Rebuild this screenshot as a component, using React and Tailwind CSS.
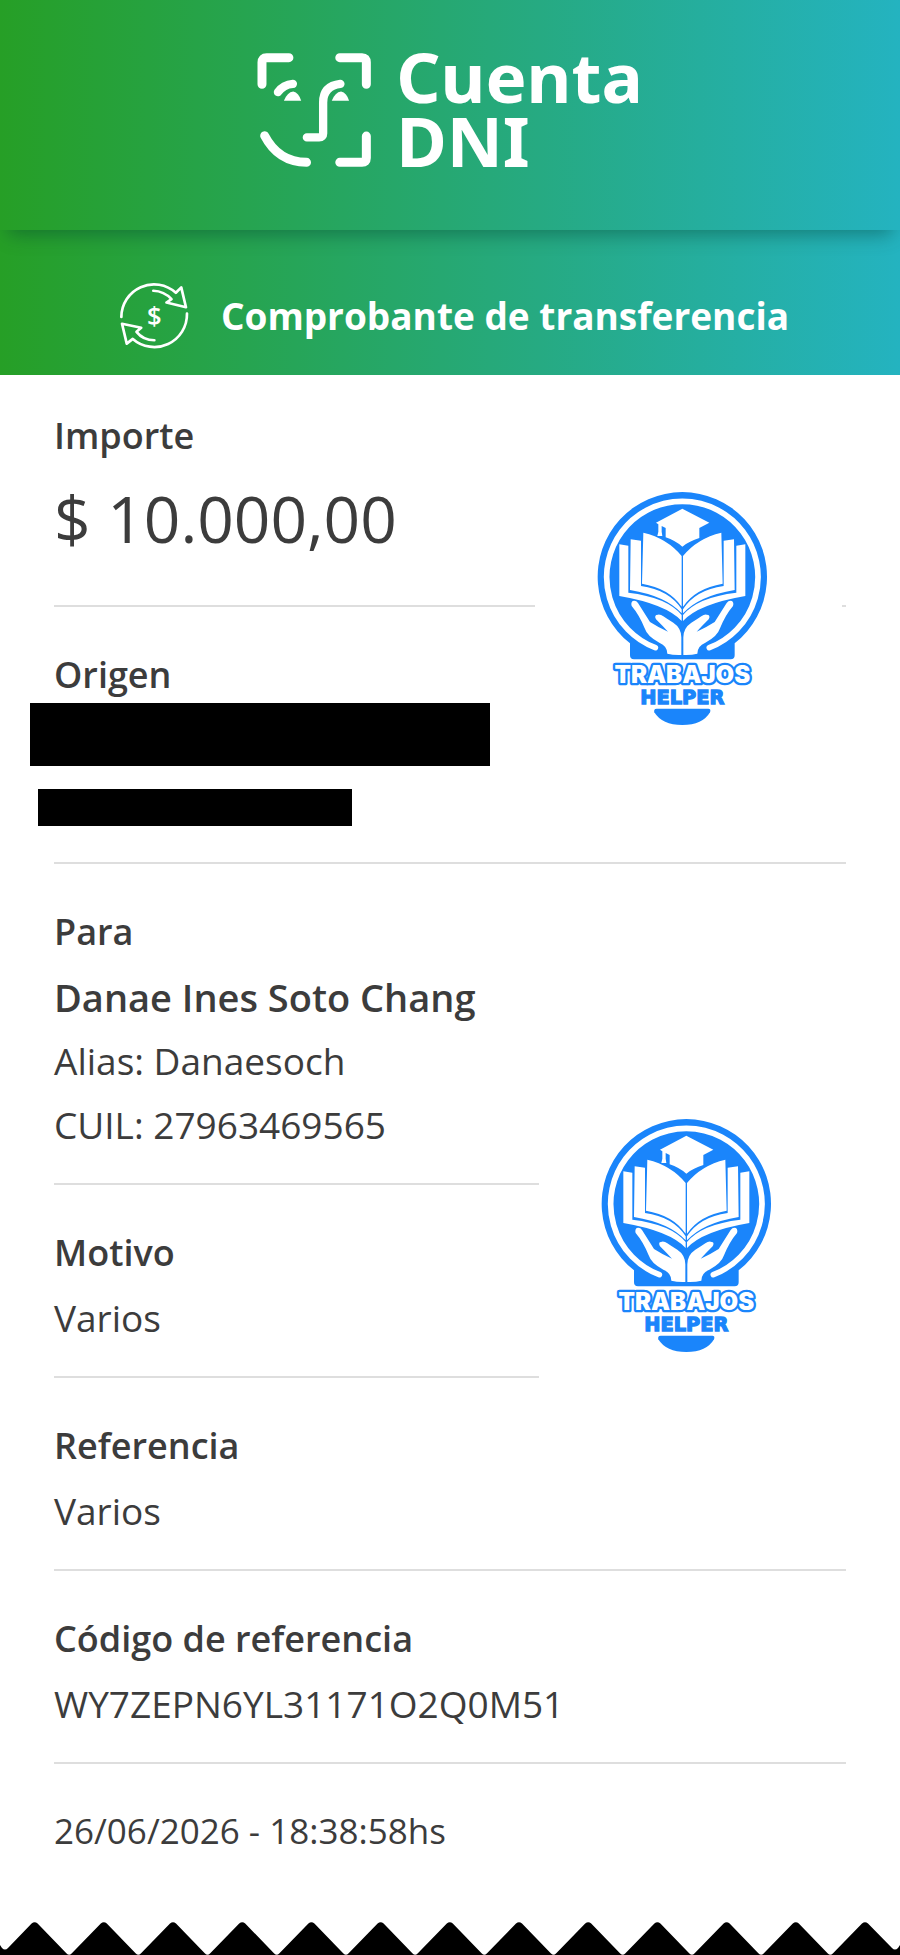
import React from "react";

const TransferIcon = () => (
  <svg
    viewBox="58 48 208 212"
    className="w-[70px] shrink-0"
    fill="none"
    stroke="white"
    strokeWidth="8"
    strokeLinecap="round"
    strokeLinejoin="round"
    aria-hidden="true"
  >
    <path d="M65 158 A97 97 0 0 1 227 86 L243 70 L257 129 L199 115 L214 105 Q192 81 160 80" />
    <path d="M260 148 A97 97 0 0 1 99 223 L81 237 L67 178 L124 190 L110 202 Q130 227 163 227" />
    <text
      x="163"
      y="182"
      textAnchor="middle"
      fill="white"
      stroke="none"
      className="font-['Open_Sans',sans-serif] text-[76px] font-semibold"
    >
      $
    </text>
  </svg>
);

const FaceLogo = () => (
  <svg
    viewBox="48 66 346 348"
    className="mt-2 w-[115px] shrink-0"
    fill="none"
    stroke="white"
    strokeWidth="27"
    strokeLinecap="round"
    strokeLinejoin="round"
    aria-hidden="true"
  >
    <path d="M63 163 V97 Q63 83 77 83 H144" />
    <path d="M297 83 H364 Q377 83 377 97 V163" />
    <path d="M377 319 V385 Q377 398 364 398 H297" />
    <path d="M71 318 Q112 397 197 398" />
    <path d="M111 187 Q127 164 156 162" strokeWidth="25" />
    <path d="M299 162 Q247 168 247 218 V311 Q247 323 235 323 H198" strokeWidth="25" />
    <path d="M129 213 Q139 187 157 185 Q174 189 181 213 Z" fill="white" stroke="none" />
    <path d="M273 213 Q283 187 301 185 Q318 189 325 213 Z" fill="white" stroke="none" />
  </svg>
);

const HalfEmblem = () => (
  <>
    <path d="M118 193 L145 197 V338 Q262 352 305 405 V423 Q258 372 118 348 Z" />
    <path d="M152 178 L183 182 V318 Q268 330 305 388 V400 Q258 348 150 330 Z" />
    <path d="M190 158 Q262 175 305 228 V380 Q268 325 186 311 Z" />
    <path d="M158 363 Q168 360 174 369 L210 426 Q238 444 264 455 Q248 438 228 418 Q221 404 234 404 Q242 403 250 409 Q264 419 280 428 Q304 444 304 472 V525 Q280 526 262 521 Q262 498 238 488 Q202 470 194 445 Q178 405 155 378 Q152 368 158 363 Z" />
  </>
);

const Watermark = ({ className }) => (
  <svg
    viewBox="-135 -75 921 921"
    className={`absolute w-[307px] bg-white ${className}`}
    role="img"
    aria-label="Trabajos Helper"
  >
    <g fill="#1a85fb">
      <path d="M150 490 A254 254 0 1 1 464 490 V526 Q464 538 452 538 H162 Q150 538 150 526 Z" />
      <path d="M230 686 H385 Q394 687 390 697 Q368 735 307 735 Q246 735 223 697 Q220 687 230 686 Z" />
    </g>
    <path
      d="M226 503 A227 227 0 1 1 388 503"
      fill="none"
      stroke="white"
      strokeWidth="17"
      strokeLinecap="round"
    />
    <g fill="white">
      <path d="M307 86 L388 128 L358 144 V174 Q328 183 307 200 Q286 182 257 172 V144 L245 138 V155 L247 168 H232 L235 155 V133 L228 128 Z" />
      <HalfEmblem />
      <g transform="translate(614 0) scale(-1 1)">
        <HalfEmblem />
      </g>
    </g>
    <g textAnchor="middle">
      <text
        x="307"
        y="672"
        fill="#1a85fb"
        stroke="#1a85fb"
        strokeWidth="4"
        className="font-['DejaVu_Sans',sans-serif] text-[58px] font-bold"
      >
        HELPER
      </text>
      <text
        x="307"
        y="610"
        fill="white"
        stroke="#1a85fb"
        strokeWidth="14"
        strokeLinejoin="round"
        paintOrder="stroke"
        className="font-['Inter',sans-serif] text-[72px] font-black"
      >
        TRABAJOS
      </text>
    </g>
  </svg>
);

// torn paper edge: 13 teeth, shallow notch at both ends
const TornEdge = () => {
  const peaks = Array.from({ length: 13 }, (_, i) => 34.6 + i * 69.2);
  const teeth = peaks
    .map((x, i) => {
      const rise = `L${x - 3} 1.5 Q${x} -1 ${x + 3} 1.5`;
      if (i === peaks.length - 1) return `${rise} L${x + 27} 26 Q${x + 30} 29 ${x + 33} 26`;
      return `${rise} L${x + 32} 31.5 Q${x + 34.6} 34 ${x + 37} 31.5`;
    })
    .join(" ");
  return (
    <svg viewBox="0 0 900 34" className="block w-full" aria-hidden="true">
      <path d={`M0 34 V23 L2 26 Q5 29 8 26 ${teeth} L900 23 V34 Z`} fill="black" />
    </svg>
  );
};

const Section = ({ title, children, className = "pt-[35px] pb-[26px]" }) => (
  <section className={`border-b-2 border-[#dedede] ${className}`}>
    <h2 className="text-[36px] leading-[66px] font-semibold">{title}</h2>
    {children}
  </section>
);

const Value = ({ children }) => (
  <p className="text-[37px] leading-[64px]">{children}</p>
);

const App = () => {
  return (
    <div className="bg-white font-['Open_Sans',sans-serif] text-[#3c3c3c]">
      <div className="bg-linear-to-r/srgb from-[#269f26] via-[#26aa82] via-60% to-[#24b3c0]">
        <header className="flex items-start justify-center gap-6 px-6 pt-11 pb-[58px] shadow-[0_12px_18px_-8px_rgba(0,60,50,0.45)]">
          <FaceLogo />
          <h1 className="font-['Noto_Sans',sans-serif] text-[69px] leading-[64px] font-bold text-white">
            Cuenta
            <br />
            DNI
          </h1>
        </header>
        <div className="flex items-center justify-center gap-8 pt-[50px] pr-6 pb-6 pl-8">
          <TransferIcon />
          <p className="text-[37px] leading-[70px] font-bold text-white">
            Comprobante de transferencia
          </p>
        </div>
      </div>

      <main className="relative px-[54px]">
        <Section title="Importe" className="pt-7 pb-9">
          <p className="text-[64px] leading-[100px]">$ 10.000,00</p>
        </Section>
        <Section title="Origen" className="pt-[35px] pb-9">
          <div className="-mt-[5px] -ml-6 h-[63px] w-[460px] bg-black" />
          <div className="mt-[23px] -ml-4 h-[37px] w-[314px] bg-black" />
        </Section>
        <Section title="Para">
          <p className="text-[38px] leading-[64px] font-semibold">Danae Ines Soto Chang</p>
          <Value>Alias: Danaesoch</Value>
          <Value>CUIL: 27963469565</Value>
        </Section>
        <Section title="Motivo">
          <Value>Varios</Value>
        </Section>
        <Section title="Referencia">
          <Value>Varios</Value>
        </Section>
        <Section title="Código de referencia">
          <Value>WY7ZEPN6YL31171O2Q0M51</Value>
        </Section>
        <p className="pt-[35px] pb-[59px] text-[35px] leading-[64px]">26/06/2026 - 18:38:58hs</p>

        <Watermark className="top-[80px] right-[58px]" />
        <Watermark className="top-[707px] right-[54px]" />
      </main>

      <TornEdge />
    </div>
  );
};

export default App;
